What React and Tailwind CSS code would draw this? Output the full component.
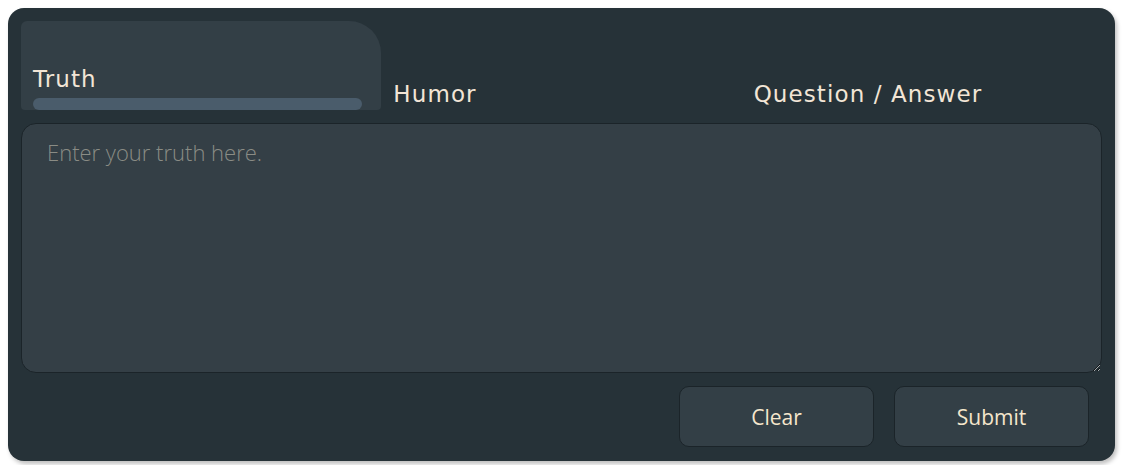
import React, { useState } from "react";

const tabs = [
  { id: "truth", label: "Truth", placeholder: "Enter your truth here." },
  { id: "humor", label: "Humor", placeholder: "Enter your humor here." },
  { id: "qa", label: "Question / Answer", placeholder: "Enter your question here." },
];

const App = () => {
  const [active, setActive] = useState("truth");
  const [text, setText] = useState("");

  const current = tabs.find((t) => t.id === active);

  return (
    <div className="min-h-[465px] bg-white pt-2 pl-2">
      <div className="w-[1107px] h-[453px] rounded-[16px] bg-[#263238] p-[13px] flex flex-col shadow-[2px_3px_4px_rgba(0,0,0,0.25)]">
        <div className="flex h-[89px]">
          {tabs.map((tab) => {
            const isActive = tab.id === active;
            return (
              <button
                key={tab.id}
                onClick={() => setActive(tab.id)}
                className={
                  isActive
                    ? "flex-1 flex flex-col justify-end text-left px-3 bg-[#333f46] rounded-tl-[6px] rounded-tr-[32px] rounded-b-[4px]"
                    : "flex-1 flex flex-col justify-end text-left px-3 pb-[3px]"
                }
              >
                <span className="font-['DejaVu_Sans',sans-serif] text-[23px] leading-[26px] tracking-[1.1px] text-[#f2e5d6]">
                  {tab.label}
                </span>
                {isActive && (
                  <span className="block mt-[6px] mr-[7px] h-3 rounded-[6px] bg-[#4a5c6b]" />
                )}
              </button>
            );
          })}
        </div>

        <textarea
          value={text}
          onChange={(e) => setText(e.target.value)}
          placeholder={current.placeholder}
          className="mt-[13px] h-[250px] w-full rounded-[15px] border border-[#1b2429] bg-[#343f46] px-[25px] py-[13px] font-['Open_Sans',sans-serif] font-light text-[22px] leading-[30px] text-[#f2e5d6] placeholder:text-[#8a8c85] outline-none"
        />

        <div className="flex justify-end gap-5 mt-[13px] pr-[13px]">
          <button
            onClick={() => setText("")}
            className="w-[195px] h-[61px] pt-[2px] rounded-[10px] border border-[#1b2429] bg-[#333f46] font-['Open_Sans',sans-serif] text-[21px] text-[#f5e6cc]"
          >
            Clear
          </button>
          <button className="w-[195px] h-[61px] pt-[2px] rounded-[10px] border border-[#1b2429] bg-[#333f46] font-['Open_Sans',sans-serif] text-[21px] text-[#f5e6cc]">
            Submit
          </button>
        </div>
      </div>
    </div>
  );
};

export default App;
